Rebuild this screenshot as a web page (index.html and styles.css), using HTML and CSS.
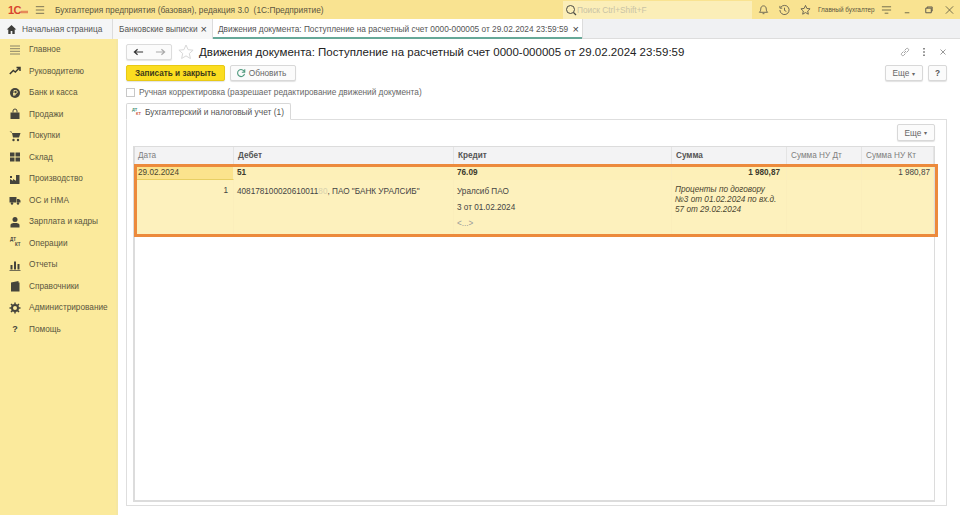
FILE: index.html
```html
<!DOCTYPE html>
<html lang="ru">
<head>
<meta charset="utf-8">
<title>Движения документа</title>
<link rel="stylesheet" href="styles.css">
</head>
<body>
<div class="app">
  <header class="topbar">
    <div class="logo"><span class="logo-1c">1С</span><svg class="logo-lines" viewBox="0 0 10 4"><path d="M0 1h10M0 3h10" stroke="#d8452e" stroke-width="1"/></svg></div>
    <svg class="burger" viewBox="0 0 12 10"><path d="M1 1h10M1 5h10M1 9h10" stroke="#66604a" stroke-width="1"/></svg>
    <div class="app-title">Бухгалтерия предприятия (базовая), редакция 3.0&nbsp; (1С:Предприятие)</div>
    <div class="search">
      <svg class="search-ic" viewBox="0 0 12 12"><circle cx="5.5" cy="5.5" r="4" fill="none" stroke="#4a4a44" stroke-width="1"/><path d="M8.5 8.5l2.5 2.5" stroke="#4a4a44" stroke-width="1.2"/></svg>
      <span>Поиск Ctrl+Shift+F</span>
    </div>
    <div class="top-icons">
      <svg class="ti" viewBox="0 0 12 12"><path d="M6 1.5c-2 0-3 1.5-3 3.500 0 2-1 3-1.500 3.500h9c-.5-.5-1.500-1.500-1.500-3.500 0-2-1-3.500-3-3.500zM5 10h2" fill="none" stroke="#55524a" stroke-width=".9"/></svg>
      <svg class="ti" viewBox="0 0 12 12"><path d="M2 3a5 5 0 1 1-1 3M1 1.500V4h2.500M6 3.500V6.500l2 1" fill="none" stroke="#55524a" stroke-width=".9"/></svg>
      <svg class="ti ti-star" viewBox="0 0 12 12"><path d="M6 1l1.500 3.300 3.500.4-2.600 2.400.7 3.500L6 8.800l-3.100 1.800.7-3.500L1 4.700l3.500-.4z" fill="none" stroke="#55524a" stroke-width=".9"/></svg>
      <span class="user">Главный бухгалтер</span>
      <svg class="ti" viewBox="0 0 12 12"><path d="M1 2.500h10M1 6h10M4 9.500h4" stroke="#6a6548" stroke-width="1"/></svg>
      <svg class="ti" viewBox="0 0 12 12"><path d="M3 9h5" stroke="#6a6548" stroke-width="1"/></svg>
      <svg class="ti" viewBox="0 0 12 12"><path d="M3 4h6v5H3zM4.500 4V2.700h5.500v4.500H9" fill="none" stroke="#55524a" stroke-width="1"/></svg>
      <svg class="ti" viewBox="0 0 12 12"><path d="M2 2l8 8M10 2l-8 8" stroke="#6a6548" stroke-width="1"/></svg>
    </div>
  </header>

  <nav class="tabsbar">
    <div class="tab tab-home">
      <svg class="home-ic" viewBox="0 0 12 12"><path d="M6 1L.8 6h1.700v5h2.600V7.500h1.800V11h2.600V6h1.700z" fill="#3d3d3a"/></svg>
      <span>Начальная страница</span>
    </div>
    <div class="tab tab-bank"><span>Банковские выписки</span><span class="tab-x">×</span></div>
    <div class="tab tab-active"><span>Движения документа: Поступление на расчетный счет 0000-000005 от 29.02.2024 23:59:59</span><span class="tab-x">×</span></div>
  </nav>

  <div class="body">
    <aside class="sidebar">
      <div class="side-item"><svg class="si" viewBox="0 0 12 12"><path d="M1 2h10M1 4.700h10M1 7.300h10M1 10h10" stroke="#8a8468" stroke-width="1"/></svg><span>Главное</span></div>
      <div class="side-item"><svg class="si" viewBox="0 0 12 12"><path d="M.8 9l3.500-3.500 2 1.500L10 3.200M7.500 2.500H11V6" fill="none" stroke="#3b3a33" stroke-width="1.500"/></svg><span>Руководителю</span></div>
      <div class="side-item"><svg class="si" viewBox="0 0 12 12"><circle cx="6" cy="6" r="5" fill="#45443c"/><path d="M5 9V3.500h1.800a1.500 1.500 0 0 1 0 3H4M4 7.700h3" fill="none" stroke="#fbea9c" stroke-width=".9"/></svg><span>Банк и касса</span></div>
      <div class="side-item"><svg class="si" viewBox="0 0 12 12"><path d="M1.500 4.500h9V11h-9z" fill="#45443c"/><path d="M4 4.500V3a2 2 0 0 1 4 0v1.500" fill="none" stroke="#45443c" stroke-width="1"/></svg><span>Продажи</span></div>
      <div class="side-item"><svg class="si" viewBox="0 0 12 12"><path d="M.5 1.500h2l.5 1.500h8.500L10 7.500H4L3 3" fill="#45443c"/><circle cx="4.500" cy="10" r="1.200" fill="#45443c"/><circle cx="9" cy="10" r="1.200" fill="#45443c"/></svg><span>Покупки</span></div>
      <div class="side-item"><svg class="si" viewBox="0 0 12 12"><path d="M1 1.500h4.500v4H1zM6.500 1.500H11v4H6.500zM1 6.500h4.500v4H1zM6.500 6.500H11v4H6.500z" fill="#45443c"/></svg><span>Склад</span></div>
      <div class="side-item"><svg class="si" viewBox="0 0 12 12"><path d="M1 11V6l3 1.800V6l3 1.800V2h3.500v9z" fill="#45443c"/><path d="M1 3h2v2H1z" fill="#45443c"/></svg><span>Производство</span></div>
      <div class="side-item"><svg class="si" viewBox="0 0 12 12"><path d="M.5 3h7v5.500h-7zM8 5h2l1.500 1.500v2H8z" fill="#45443c"/><circle cx="3" cy="9.500" r="1.200" fill="#45443c"/><circle cx="9" cy="9.500" r="1.200" fill="#45443c"/></svg><span>ОС и НМА</span></div>
      <div class="side-item"><svg class="si" viewBox="0 0 12 12"><circle cx="6" cy="3.500" r="2.500" fill="#45443c"/><path d="M1.500 11.500V9c0-1.500 2-2 4.500-2s4.500.5 4.500 2v2.500z" fill="#45443c"/></svg><span>Зарплата и кадры</span></div>
      <div class="side-item"><span class="si si-dtkt"><b class="dt">ДТ</b><b class="kt">КТ</b></span><span>Операции</span></div>
      <div class="side-item"><svg class="si" viewBox="0 0 12 12"><path d="M1.500 6h2v4.500h-2zM5 2.500h2v8H5zM8.500 5h2v5.500h-2zM.5 11h11v.7H.5z" fill="#45443c"/></svg><span>Отчеты</span></div>
      <div class="side-item"><svg class="si" viewBox="0 0 12 12"><path d="M2 2.500L9.500 1v1.500H10.500V11.500H2z" fill="#45443c"/></svg><span>Справочники</span></div>
      <div class="side-item"><svg class="si" viewBox="0 0 12 12"><circle cx="6" cy="6" r="3" fill="none" stroke="#45443c" stroke-width="2"/><path d="M6 .5v2M6 9.500v2M.5 6h2M9.500 6h2M2 2l1.500 1.500M8.500 8.500L10 10M10 2L8.500 3.500M3.500 8.500L2 10" stroke="#45443c" stroke-width="1.500"/></svg><span>Администрирование</span></div>
      <div class="side-item"><span class="si si-q">?</span><span>Помощь</span></div>
    </aside>

    <main class="main">
      <div class="title-row">
        <div class="nav-btns">
          <span class="nav-b"><svg viewBox="0 0 12 8"><path d="M11 4H2M5 1L1.500 4 5 7" fill="none" stroke="#333" stroke-width="1.300"/></svg></span>
          <span class="nav-b"><svg viewBox="0 0 12 8"><path d="M1 4h9M7 1l3.500 3L7 7" fill="none" stroke="#aaa" stroke-width="1.300"/></svg></span>
        </div>
        <svg class="fav" viewBox="0 0 16 16"><path d="M8 1l2.100 4.700 5 .5-3.800 3.300 1.100 5L8 11.900l-4.400 2.600 1.100-5L.9 6.200l5-.5z" fill="none" stroke="#d8d8d8" stroke-width="1"/></svg>
        <h1>Движения документа: Поступление на расчетный счет 0000-000005 от 29.02.2024 23:59:59</h1>
        <div class="title-ic">
          <svg viewBox="0 0 12 12" class="tic"><path d="M5 7l2-2M4.500 5.500L2.500 7.500a1.500 1.500 0 0 0 2 2L6.500 7.500M5.500 4.500L7.500 2.500a1.500 1.500 0 0 1 2 2L7.500 6.500" fill="none" stroke="#9a9a9a" stroke-width=".9"/></svg>
          <svg viewBox="0 0 12 12" class="tic"><path d="M6 2v1.500M6 5.200v1.500M6 8.500V10" stroke="#666" stroke-width="1.500"/></svg>
          <svg viewBox="0 0 12 12" class="tic"><path d="M3.500 3.500l5 5M8.500 3.500l-5 5" stroke="#999" stroke-width="1"/></svg>
        </div>
      </div>

      <div class="cmd-row">
        <button class="btn btn-primary">Записать и закрыть</button>
        <button class="btn btn-refresh"><svg viewBox="0 0 12 12" class="ref-ic"><path d="M10 4.500A4.200 4.200 0 1 0 10.200 7M10.500 1.500V5H7" fill="none" stroke="#4f9a7e" stroke-width="1.300"/></svg>Обновить</button>
        <span class="spacer"></span>
        <button class="btn btn-more">Еще <i>▾</i></button>
        <button class="btn btn-help">?</button>
      </div>

      <label class="check-row"><span class="checkbox"></span>Ручная корректировка (разрешает редактирование движений документа)</label>

      <div class="tab-strip">
        <div class="doc-tab"><span class="dtkt-ic"><b class="dt">ДТ</b><b class="kt">КТ</b></span>Бухгалтерский и налоговый учет (1)</div>
      </div>

      <section class="panel">
        <div class="panel-bar"><button class="btn btn-more">Еще <i>▾</i></button></div>
        <div class="grid-wrap">
          <div class="grid">
            <div class="hd hd-date">Дата</div>
            <div class="hd hd-b">Дебет</div>
            <div class="hd hd-b">Кредит</div>
            <div class="hd hd-b">Сумма</div>
            <div class="hd">Сумма НУ Дт</div>
            <div class="hd">Сумма НУ Кт</div>

            <div class="cell cell-date">29.02.2024</div>
            <div class="cell"><b>51</b></div>
            <div class="cell"><b>76.09</b></div>
            <div class="cell right"><b>1 980,87</b></div>
            <div class="cell"></div>
            <div class="cell right last">1 980,87</div>

            <div class="col col-num">1</div>
            <div class="col"><span class="ln">408178100020610011<span class="fade">80</span>, ПАО "БАНК УРАЛСИБ"</span></div>
            <div class="col">
              <span class="ln">Уралсиб ПАО</span>
              <span class="ln">3 от 01.02.2024</span>
              <span class="ln muted">&lt;...&gt;</span>
            </div>
            <div class="col col-note">Проценты по договору №3 от 01.02.2024 по вх.д. 57 от 29.02.2024</div>
            <div class="col"></div>
            <div class="col"></div>
          </div>
          <div class="highlight"></div>
        </div>
      </section>
    </main>
  </div>
</div>
</body>
</html>
```
FILE: styles.css
```css
* { box-sizing: border-box; }
html, body { margin: 0; height: 100%; }
body { font-family: "Liberation Sans", Arial, sans-serif; color: #444; background: #fff; overflow: hidden; }
.app { width: 960px; height: 515px; display: flex; flex-direction: column; }

.topbar { height: 19px; background: #f9e391; display: flex; align-items: center; flex: none; }
.logo { width: 27px; margin-left: 8px; display: flex; align-items: center; flex: none; }
.logo-1c { font-size: 11px; font-weight: bold; color: #d8452e; letter-spacing: -.5px; }
.logo-lines { width: 7px; height: 4px; margin-top: 4px; }
.burger { width: 10px; height: 10px; flex: none; }
.app-title { font-size: 8.350px; color: #5b5640; margin-left: 10px; width: 508px; white-space: nowrap; flex: none; }
.search { width: 189px; height: 18px; background: #fbeeb8; display: flex; align-items: center; font-size: 8.300px; color: #c9c3a6; white-space: nowrap; flex: none; }
.search-ic { width: 12px; height: 12px; margin-left: 2px; flex: none; }
.top-icons { display: flex; align-items: center; flex: 1; padding-left: 6px; }
.ti { width: 11px; height: 12px; flex: none; margin-right: 10px; }
.user { font-size: 6.400px; color: #5b5640; width: 63px; margin-left: -3px; white-space: nowrap; flex: none; }

.tabsbar { height: 20px; background: #f0f1f3; display: flex; flex: none; font-size: 8.300px; color: #555; border-bottom: 1px solid #ddd; }
.tab { display: flex; align-items: center; height: 20px; white-space: nowrap; border-right: 1px solid #dcdcdc; background: #f4f5f6; flex: none; }
.tab-home { width: 113px; padding-left: 6px; }
.home-ic { width: 11px; height: 11px; margin-right: 5px; flex: none; }
.tab-bank { width: 100px; padding-left: 6px; justify-content: space-between; padding-right: 5px; background: #f7f7f7; }
.tab-active { width: 370px; padding-left: 5px; padding-right: 3px; justify-content: space-between; background: #fff; box-shadow: inset 0 -2px 0 #66a898; }
.tab-x { font-size: 11px; color: #444; line-height: 1; }

.body { flex: 1; display: flex; min-height: 0; }
.sidebar { width: 118px; flex: none; background: #fbea9c; border-right: 2px solid #f5e7a2; font-size: 8.250px; color: #5a5640; }
.side-item { height: 21.500px; display: flex; align-items: center; padding-left: 9px; white-space: nowrap; }
.si { width: 12px; height: 12px; margin-right: 8px; flex: none; }
.si-dtkt, .dtkt-ic { display: flex; flex-direction: column; font-size: 4.500px; line-height: 5px; }
.si-dtkt b, .dtkt-ic b { font-weight: bold; }
.si-dtkt { color: #45443c; padding-left: 1px; }
.si-dtkt .kt { padding-left: 5px; }
.si-q { font-size: 9px; font-weight: bold; text-align: center; color: #45443c; line-height: 12px; }

.main { flex: 1; min-width: 0; padding: 5px 13px 9px 8px; display: flex; flex-direction: column; }
.title-row { display: flex; align-items: center; height: 16px; flex: none; }
.nav-btns { display: flex; width: 46px; height: 16px; border: 1px solid #dcdcdc; border-radius: 2px; background: #fbfbfb; box-shadow: 0 1px 1px #e4e4e4; flex: none; }
.nav-b { flex: 1; display: flex; align-items: center; justify-content: center; }
.nav-b svg { width: 11px; height: 8px; }
.fav { width: 16px; height: 16px; margin-left: 6px; flex: none; }
.title-row h1 { font-size: 11.500px; font-weight: normal; color: #222; margin: 0 0 0 5px; white-space: nowrap; flex: 1; }
.title-ic { display: flex; gap: 7px; flex: none; margin-right: -2px; }
.tic { width: 12px; height: 12px; }

.cmd-row { display: flex; align-items: stretch; height: 16px; margin-top: 5px; flex: none; }
.btn { font-family: inherit; font-size: 8.300px; border: 1px solid #d8d8d8; border-radius: 2px; background: #fbfbfb; color: #666; box-shadow: 0 1px 1px #e2e2e2; padding: 0; display: flex; align-items: center; justify-content: center; white-space: nowrap; height: 16px; }
.btn i { font-style: normal; font-size: 6px; margin-left: 3px; }
.btn-primary { width: 99px; background: #fbdd20; border-color: #e8c915; color: #3e3a1a; font-weight: bold; font-size: 8.200px; }
.btn-refresh { width: 66px; margin-left: 5px; padding-right: 4px; }
.ref-ic { width: 10px; height: 10px; margin-right: 3px; }
.spacer { flex: 1; }
.btn-more { width: 38px; }
.btn-help { width: 19px; margin-left: 5px; font-weight: bold; color: #555; }

.check-row { display: flex; align-items: center; height: 13px; margin-top: 5px; font-size: 8.270px; color: #666; flex: none; }
.checkbox { width: 9px; height: 9px; border: 1px solid #c8c8c8; background: #fff; margin-right: 4px; flex: none; }

.tab-strip { height: 17px; margin-top: 4px; flex: none; display: flex; position: relative; z-index: 1; }
.doc-tab { width: 165px; height: 17px; border: 1px solid #d8d8d8; border-bottom: 1px solid #fff; border-radius: 2px 2px 0 0; background: #fff; font-size: 8.400px; color: #555; display: flex; align-items: center; padding-left: 5px; white-space: nowrap; }
.dtkt-ic { margin-right: 3px; width: 10px; font-size: 4px; line-height: 4px; }
.dtkt-ic .dt { color: #3e8c73; }
.dtkt-ic .kt { color: #c9553d; padding-left: 4px; }

.panel { flex: 1; min-height: 0; margin-top: -1px; border: 1px solid #dedede; padding: 4px 11px 3px 6px; display: flex; flex-direction: column; }
.panel-bar { display: flex; justify-content: flex-end; height: 17px; flex: none; }
.panel-bar .btn { height: 17px; }
.grid-wrap { flex: 1; min-height: 0; margin-top: 5px; border: 1px solid #dcdcdc; border-width: 1px 1px 2px 2px; position: relative; }
.grid { display: grid; grid-template-columns: 99px 220px 218px 115px 75px 1fr; grid-template-rows: 18px 15px 54px; font-size: 8.200px; color: #444; }
.hd { background: #f3f3f4; padding-left: 4px; display: flex; align-items: center; color: #7e7e7e; font-size: 8.200px; border-right: 1px solid #e4e4e4; border-bottom: 1px solid #d8d8d8; }
.hd-date { padding-left: 3px; }
.hd-b { font-weight: bold; color: #555; font-size: 8.200px; }
.cell { background: #fdf0b8; padding: 0 3px; display: flex; align-items: center; border-right: 1px solid #fbeebb; }
.cell b { font-weight: bold; color: #3c3a2c; }
.cell.right { justify-content: flex-end; padding-right: 6px; }
.cell.right.last { padding-right: 3px; }
.cell-date { background: #fbe38d; border-bottom: 1px solid #e8cf63; color: #4a4630; }
.col { background: #fdf1bd; padding: 6px 3px 0; display: flex; flex-direction: column; border-right: 1px solid #fbeebb; }
.ln { height: 17px; display: block; line-height: 12px; white-space: nowrap; }
.fade { color: #d9d2ae; }
.muted { color: #999; }
.col-num { text-align: right; padding-right: 5px; display: block; }
.col-note { font-style: italic; line-height: 10px; padding: 5px 6px 0 3px; display: block; color: #4a4630; }
.highlight { position: absolute; left: -1px; right: -4px; top: 17px; height: 73px; border: 3px solid #ec8a3c; pointer-events: none; }
```
